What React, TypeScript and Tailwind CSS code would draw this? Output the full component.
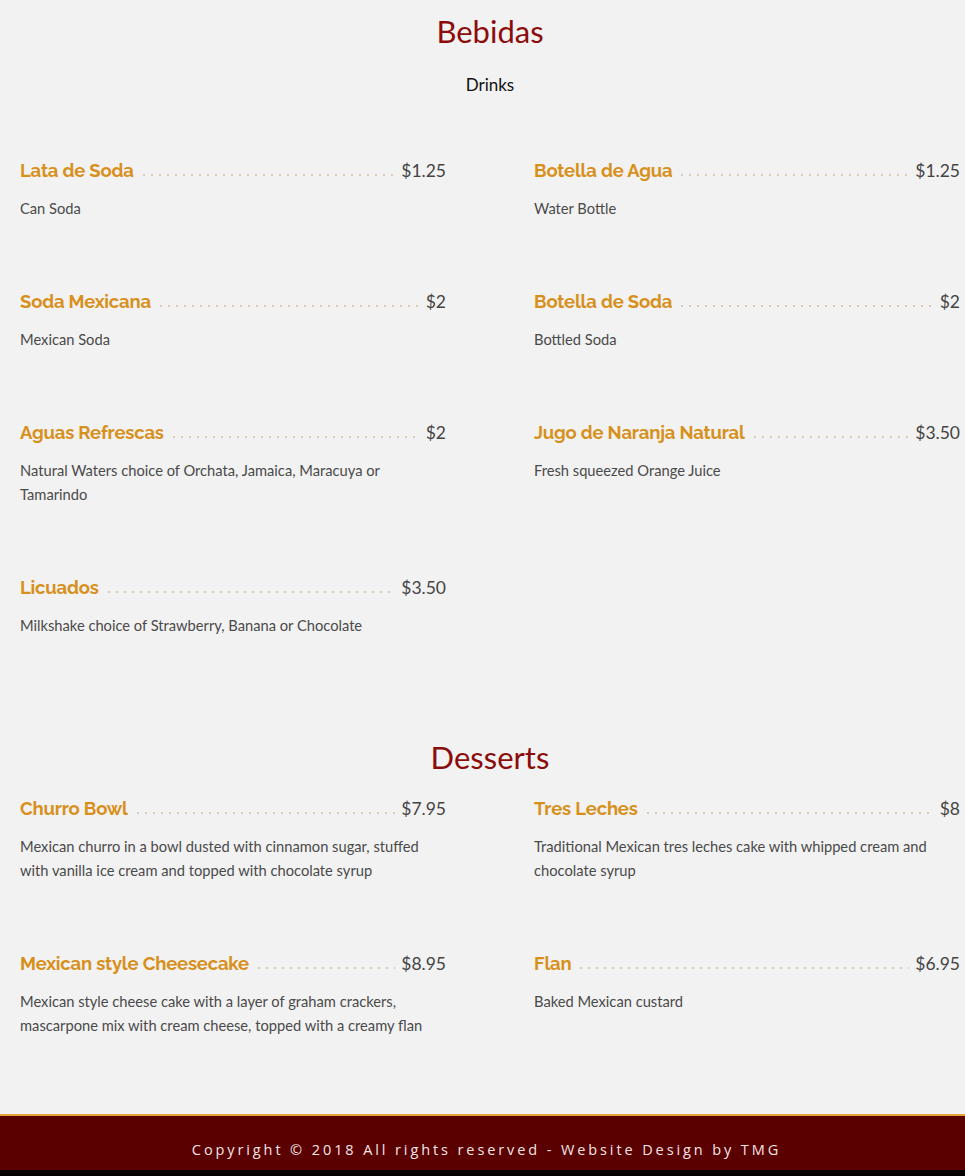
import React from 'react'

type Item = { name: string; price: string; desc: string }

const drinks: Item[] = [
  { name: 'Lata de Soda', price: '$1.25', desc: 'Can Soda' },
  { name: 'Botella de Agua', price: '$1.25', desc: 'Water Bottle' },
  { name: 'Soda Mexicana', price: '$2', desc: 'Mexican Soda' },
  { name: 'Botella de Soda', price: '$2', desc: 'Bottled Soda' },
  { name: 'Aguas Refrescas', price: '$2', desc: 'Natural Waters choice of Orchata, Jamaica, Maracuya or Tamarindo' },
  { name: 'Jugo de Naranja Natural', price: '$3.50', desc: 'Fresh squeezed Orange Juice' },
  { name: 'Licuados', price: '$3.50', desc: 'Milkshake choice of Strawberry, Banana or Chocolate' },
]

const desserts: Item[] = [
  { name: 'Churro Bowl', price: '$7.95', desc: 'Mexican churro in a bowl dusted with cinnamon sugar, stuffed with vanilla ice cream and topped with chocolate syrup' },
  { name: 'Tres Leches', price: '$8', desc: 'Traditional Mexican tres leches cake with whipped cream and chocolate syrup' },
  { name: 'Mexican style Cheesecake', price: '$8.95', desc: 'Mexican style cheese cake with a layer of graham crackers, mascarpone mix with cream cheese, topped with a creamy flan' },
  { name: 'Flan', price: '$6.95', desc: 'Baked Mexican custard' },
]

function MenuItem({ item }: { item: Item }) {
  return (
    <div className="mb-[67px]">
      <div className="flex items-center h-[28px] mt-[1px]">
        <span className="text-[18.5px] font-bold text-[#d8901c] tracking-[-0.2px] font-['Raleway','Lato',sans-serif] whitespace-nowrap">
          {item.name}
        </span>
        <span className="flex-1 mx-[6px] mt-[8px] h-[4px] bg-[radial-gradient(circle,#dccbb4_0.9px,transparent_1.3px)] bg-[length:8px_4px] bg-repeat-x" />
        <span className="text-[17.5px] text-[#444] whitespace-nowrap">{item.price}</span>
      </div>
      <p className="mt-[11px] text-[14.7px] leading-[24px] text-[#4a4a4a] pr-[10px]">{item.desc}</p>
    </div>
  )
}

function Grid({ items }: { items: Item[] }) {
  return (
    <div className="grid grid-cols-2 gap-x-[88px] pl-[20px] pr-[5px]">
      {items.map((it) => (
        <MenuItem key={it.name} item={it} />
      ))}
    </div>
  )
}

export default function App() {
  return (
    <div className="min-h-screen bg-[#f2f2f2] font-['Lato',sans-serif]">
      <section className="pt-[13px]">
        <div className="pl-[15px]">
          <h2 className="text-center text-[31px] leading-[36px] text-[#8c0c0c]">Bebidas</h2>
          <p className="text-center mt-[24px] text-[17px] leading-[24px] text-[#111]">Drinks</p>
        </div>
        <div className="mt-[59px]">
          <Grid items={drinks} />
        </div>
      </section>

      <section className="pt-[35px]">
        <h2 className="pl-[15px] text-center text-[31px] leading-[36px] text-[#8c0c0c]">Desserts</h2>
        <div className="mt-[19px]">
          <Grid items={desserts} />
        </div>
      </section>

      <footer className="mt-[10px] border-t-2 border-[#e6a23c] bg-[#5a0000]">
        <p className="h-[54px] pt-[24px] pl-[8px] text-center text-[14.5px] leading-[20px] tracking-[2.9px] text-[#f2e4e4] font-['Open_Sans',sans-serif]">
          Copyright © 2018 All rights reserved - Website Design by TMG
        </p>
      </footer>
      <div className="h-[6px] bg-black" />
    </div>
  )
}
